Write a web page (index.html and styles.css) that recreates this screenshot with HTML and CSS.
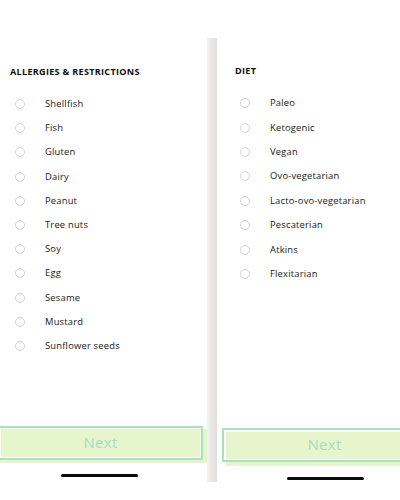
FILE: index.html
```html
<!DOCTYPE html>
<html lang="en">
<head>
<meta charset="utf-8">
<title>Preferences</title>
<link rel="stylesheet" href="styles.css">
</head>
<body>
<div class="page">
  <section class="screen screen-left">
    <h2 class="title">ALLERGIES &amp; RESTRICTIONS</h2>
    <ul class="options">
      <li class="option"><span class="radio"></span><span class="label">Shellfish</span></li>
      <li class="option"><span class="radio"></span><span class="label">Fish</span></li>
      <li class="option"><span class="radio"></span><span class="label">Gluten</span></li>
      <li class="option"><span class="radio"></span><span class="label">Dairy</span></li>
      <li class="option"><span class="radio"></span><span class="label">Peanut</span></li>
      <li class="option"><span class="radio"></span><span class="label">Tree nuts</span></li>
      <li class="option"><span class="radio"></span><span class="label">Soy</span></li>
      <li class="option"><span class="radio"></span><span class="label">Egg</span></li>
      <li class="option"><span class="radio"></span><span class="label">Sesame</span></li>
      <li class="option"><span class="radio"></span><span class="label">Mustard</span></li>
      <li class="option"><span class="radio"></span><span class="label">Sunflower seeds</span></li>
    </ul>
    <div class="cta">
      <span class="cta-fill"></span>
      <button class="cta-btn" type="button">Next</button>
    </div>
    <div class="home-bar"></div>
  </section>
  <div class="divider"></div>
  <section class="screen screen-right">
    <h2 class="title">DIET</h2>
    <ul class="options">
      <li class="option"><span class="radio"></span><span class="label">Paleo</span></li>
      <li class="option"><span class="radio"></span><span class="label">Ketogenic</span></li>
      <li class="option"><span class="radio"></span><span class="label">Vegan</span></li>
      <li class="option"><span class="radio"></span><span class="label">Ovo-vegetarian</span></li>
      <li class="option"><span class="radio"></span><span class="label">Lacto-ovo-vegetarian</span></li>
      <li class="option"><span class="radio"></span><span class="label">Pescaterian</span></li>
      <li class="option"><span class="radio"></span><span class="label">Atkins</span></li>
      <li class="option"><span class="radio"></span><span class="label">Flexitarian</span></li>
    </ul>
    <div class="cta">
      <span class="cta-fill"></span>
      <button class="cta-btn" type="button">Next</button>
    </div>
    <div class="home-bar"></div>
  </section>
</div>
</body>
</html>
```
FILE: styles.css
```css
* { box-sizing: border-box; }
html, body {
  margin: 0;
  padding: 0;
  background: #fff;
}
body {
  width: 400px;
  height: 500px;
  overflow: hidden;
  font-family: "Open Sans", "DejaVu Sans", sans-serif;
  color: #1e1e1e;
}
.page {
  display: flex;
  width: 400px;
  height: 500px;
}
.screen {
  display: flex;
  flex-direction: column;
  height: 500px;
  min-width: 0;
  overflow: hidden;
}
.screen-left {
  width: 207px;
  flex: none;
  padding: 66px 0 23px 0;
}
.screen-right {
  flex: 1;
  padding: 65px 0 20px 0;
}
.divider {
  flex: none;
  width: 10px;
  height: 444px;
  margin-top: 38px;
  background: linear-gradient(to right, #f3f2f1 0%, #ebe9e7 40%, #e1dfdd 100%);
}
.title {
  margin: 0;
  font-size: 9.1px;
  line-height: 12px;
  font-weight: 700;
  letter-spacing: 0.28px;
  color: #111;
}
.screen-left .title { padding-left: 10px; }
.screen-right .title { padding-left: 18px; }
.options {
  list-style: none;
  margin: 14px 0 0 0;
  padding: 0;
}
.option {
  display: flex;
  align-items: center;
  height: 24.2px;
}
.screen-left .option { padding-left: 15px; }
.screen-right .option {
  padding-left: 23px;
  height: 24.4px;
}
.radio {
  flex: none;
  width: 10px;
  height: 10px;
  border-radius: 50%;
  border: 1px solid #d4d4d4;
  background: #fff;
}
.label {
  margin-left: 20px;
  font-size: 9.4px;
  line-height: 12px;
  letter-spacing: 0.2px;
  font-weight: 500;
  color: #1a1a1a;
}
.cta {
  position: relative;
  margin-top: auto;
  height: 34px;
  flex: none;
}
.cta-fill {
  position: absolute;
  top: 0;
  left: 0;
  width: 207px;
  height: 34px;
  background: #e6f5cc;
}
.cta-btn {
  position: absolute;
  top: -3px;
  left: -2px;
  width: 205px;
  height: 34px;
  margin: 0;
  padding: 0 0 2px 0;
  border: 2px solid #abe0c2;
  box-shadow: inset 0 0 0 1px rgba(255,255,255,0.8);
  background: transparent;
  font-family: "Open Sans", "DejaVu Sans", sans-serif;
  font-size: 15px;
  color: #a9dcc1;
  letter-spacing: 0.3px;
}
.screen-right .cta { margin-left: 9px; }
.screen-right .cta-fill { width: 180px; }
.screen-right .cta-btn {
  top: -4px;
  left: -4px;
}
.home-bar {
  flex: none;
  margin-top: 11px;
  height: 3px;
  width: 77px;
  border-radius: 2px;
  background: #0a0a0a;
  align-self: flex-start;
}
.screen-left .home-bar { margin-left: 61px; }
.screen-right .home-bar { margin-left: 70px; }
```
